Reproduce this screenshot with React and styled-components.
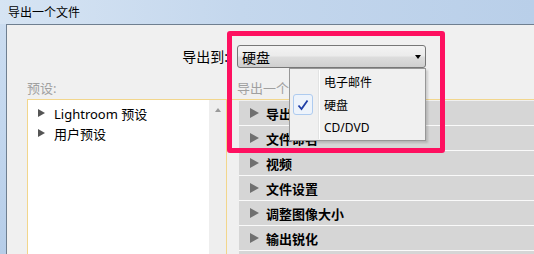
import React from 'react'
import styled, { createGlobalStyle } from 'styled-components'

const GlobalStyle = createGlobalStyle`
  html, body {
    margin: 0;
    padding: 0;
    background: #f0f0f0;
  }
  body {
    font-family: "Noto Sans", "Noto Sans CJK SC", sans-serif;
  }
`

const Window = styled.div`
  position: relative;
  width: 534px;
  height: 254px;
  overflow: hidden;
  display: flex;
  flex-direction: column;
  background: linear-gradient(180deg, #cddef1 0%, #c3d7ee 50%, #b6cde8 100%);
`

const TitleBar = styled.div`
  height: 24px;
  flex: none;
  display: flex;
  align-items: center;
  padding-left: 8px;
  font-size: 12px;
  color: #000;
  background: linear-gradient(90deg, #d6e4f3 0%, #c4d7ed 45%, #b9cfe9 100%);
`

const Body = styled.div`
  flex: 1;
  margin-left: 6px;
  border-top: 1px solid #6f7f90;
  border-left: 1px solid #6f7f90;
  background: #f0f0f0;
  display: flex;
  flex-direction: column;
`

const TopRow = styled.div`
  display: flex;
  align-items: center;
  gap: 9px;
  padding-top: 20px;
`

const TopLabel = styled.div`
  width: 221px;
  text-align: right;
  font-size: 14px;
  line-height: 23px;
  color: #000;
`

const Select = styled.div`
  position: relative;
  width: 189px;
  height: 23px;
  box-sizing: border-box;
  border: 1px solid #777;
  border-radius: 3px;
  background: linear-gradient(180deg, #f3f3f3 0%, #ebebeb 48%, #dddddd 52%, #cfcfcf 100%);
  display: flex;
  align-items: center;
  padding-left: 4px;
  font-size: 14px;
  color: #000;
`

const SelectArrow = styled.span`
  position: absolute;
  right: 4px;
  top: 9px;
  width: 0;
  height: 0;
  border-left: 3.5px solid transparent;
  border-right: 3.5px solid transparent;
  border-top: 4px solid #000;
`

const Menu = styled.div`
  position: absolute;
  top: 22px;
  right: -1px;
  width: 137px;
  box-sizing: border-box;
  border: 1px solid #979797;
  background: #f0f0f0;
  padding: 1px 0;
  box-shadow: 2px 2px 2px rgba(0, 0, 0, 0.15);
  z-index: 5;
  &::before {
    content: "";
    position: absolute;
    left: 28px;
    top: 1px;
    bottom: 1px;
    width: 1px;
    background: #e2e3e3;
    border-right: 1px solid #fff;
  }
`

const MenuItem = styled.div`
  position: relative;
  height: 23px;
  display: flex;
  align-items: center;
  padding-left: 34px;
  font-size: 12px;
  color: #000;
`

const CheckBox = styled.span`
  position: absolute;
  left: 3px;
  top: 1px;
  width: 20px;
  height: 21px;
  box-sizing: border-box;
  border: 1px solid #aecbef;
  border-radius: 3px;
  background: #edf3fb;
  display: flex;
  align-items: center;
  justify-content: center;
`

const Columns = styled.div`
  display: flex;
  padding-left: 20px;
  margin-top: 12px;
  flex: 1;
  min-height: 0;
`

const LeftColumn = styled.div`
  width: 200px;
  display: flex;
  flex-direction: column;
`

const RightColumn = styled.div`
  flex: 1;
  display: flex;
  flex-direction: column;
`

const SectionLabel = styled.div`
  height: 19px;
  line-height: 17px;
  font-size: 13px;
  color: #a0a0a0;
  padding-left: ${p => p.$indent || 0}px;
  white-space: nowrap;
`

const TreePanel = styled.div`
  flex: 1;
  display: flex;
  border: 1px solid #f2d68c;
  border-bottom: none;
  background: #fff;
`

const TreeList = styled.div`
  flex: 1;
  padding-top: 3px;
`

const TreeItem = styled.div`
  height: 20px;
  display: flex;
  align-items: center;
  gap: 9px;
  padding-left: 10px;
  font-size: 13px;
  color: #000;
`

const Triangle = styled.span`
  width: 0;
  height: 0;
  border-top: ${p => p.$size / 2}px solid transparent;
  border-bottom: ${p => p.$size / 2}px solid transparent;
  border-left: ${p => p.$size - 1}px solid ${p => p.$color};
`

const ScrollTrack = styled.div`
  width: 17px;
  background: #eeeeee;
  display: flex;
  justify-content: center;
  padding-top: 8px;
`

const ScrollUp = styled.span`
  width: 0;
  height: 0;
  border-left: 3.5px solid transparent;
  border-right: 3.5px solid transparent;
  border-bottom: 4px solid #9a9a9a;
`

const SectionPanel = styled.div`
  flex: 1;
  border-top: 1px solid #f2d68c;
  padding: 1px 0 0 12px;
`

const SectionRow = styled.div`
  height: 24px;
  border-bottom: 1px solid #fafafa;
  background: #d6d6d6;
  display: flex;
  align-items: center;
  gap: 7px;
  padding-left: 11px;
  font-size: 13px;
  font-weight: bold;
  color: #000;
  white-space: nowrap;
`

const Highlight = styled.div`
  position: absolute;
  left: 227px;
  top: 31px;
  width: 218px;
  height: 122px;
  box-sizing: border-box;
  border: 5px solid #fe1060;
  border-radius: 3px;
  pointer-events: none;
  z-index: 10;
`

const presets = ['Lightroom 预设', '用户预设']
const sections = ['导出位置', '文件命名', '视频', '文件设置', '调整图像大小', '输出锐化']
const targets = ['电子邮件', '硬盘', 'CD/DVD']

function Check() {
  return (
    <svg width="12" height="12" viewBox="0 0 12 12">
      <path d="M1.5 6.5 L4.5 10 L10.5 1.5" fill="none" stroke="#1f3ea6" strokeWidth="1.8" />
    </svg>
  )
}

export default function App() {
  return (
    <Window>
      <GlobalStyle />
      <TitleBar>导出一个文件</TitleBar>
      <Body>
        <TopRow>
          <TopLabel>导出到:</TopLabel>
          <Select>
            硬盘
            <SelectArrow />
            <Menu>
              {targets.map(t => (
                <MenuItem key={t}>
                  {t === '硬盘' && (
                    <CheckBox>
                      <Check />
                    </CheckBox>
                  )}
                  {t}
                </MenuItem>
              ))}
            </Menu>
          </Select>
        </TopRow>
        <Columns>
          <LeftColumn>
            <SectionLabel>预设:</SectionLabel>
            <TreePanel>
              <TreeList>
                {presets.map(p => (
                  <TreeItem key={p}>
                    <Triangle $size={8} $color="#555" />
                    {p}
                  </TreeItem>
                ))}
              </TreeList>
              <ScrollTrack>
                <ScrollUp />
              </ScrollTrack>
            </TreePanel>
          </LeftColumn>
          <RightColumn>
            <SectionLabel $indent={10}>导出一个文件</SectionLabel>
            <SectionPanel>
              {sections.map(s => (
                <SectionRow key={s}>
                  <Triangle $size={10} $color="#707070" />
                  {s}
                </SectionRow>
              ))}
              <SectionRow />
            </SectionPanel>
          </RightColumn>
        </Columns>
      </Body>
      <Highlight />
    </Window>
  )
}
